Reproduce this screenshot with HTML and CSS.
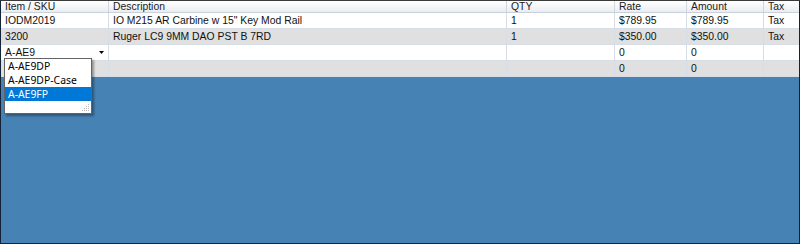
FILE: index.html
```html
<!DOCTYPE html>
<html>
<head>
<meta charset="utf-8">
<link rel="stylesheet" href="styles.css">
</head>
<body>
<div class="grid">
  <div class="row head">
    <div class="c c1">Item / SKU</div>
    <div class="c c2">Description</div>
    <div class="c c3">QTY</div>
    <div class="c c4">Rate</div>
    <div class="c c5">Amount</div>
    <div class="c c6">Tax</div>
  </div>
  <div class="row">
    <div class="c c1">IODM2019</div>
    <div class="c c2">IO M215 AR Carbine w 15" Key Mod Rail</div>
    <div class="c c3">1</div>
    <div class="c c4">$789.95</div>
    <div class="c c5">$789.95</div>
    <div class="c c6">Tax</div>
  </div>
  <div class="row alt">
    <div class="c c1">3200</div>
    <div class="c c2">Ruger LC9 9MM DAO PST B 7RD</div>
    <div class="c c3">1</div>
    <div class="c c4">$350.00</div>
    <div class="c c5">$350.00</div>
    <div class="c c6">Tax</div>
  </div>
  <div class="row">
    <div class="c c1 combo">
      <span class="combo-text">A-AE9</span>
      <span class="combo-btn"><svg width="5" height="3" viewBox="0 0 5 3"><path d="M0 0h5L2.5 3z" fill="#000"/></svg></span>
      <div class="list">
        <div class="item">A-AE9DP</div>
        <div class="item">A-AE9DP-Case</div>
        <div class="item sel">A-AE9FP</div>
        <svg class="grip" width="8" height="8" viewBox="0 0 8 8"><g fill="#b8b8b8"><rect x="6" y="0" width="1" height="1"/><rect x="4" y="2" width="1" height="1"/><rect x="6" y="2" width="1" height="1"/><rect x="2" y="4" width="1" height="1"/><rect x="4" y="4" width="1" height="1"/><rect x="6" y="4" width="1" height="1"/><rect x="0" y="6" width="1" height="1"/><rect x="2" y="6" width="1" height="1"/><rect x="4" y="6" width="1" height="1"/><rect x="6" y="6" width="1" height="1"/></g></svg>
      </div>
    </div>
    <div class="c c2"></div>
    <div class="c c3"></div>
    <div class="c c4">0</div>
    <div class="c c5">0</div>
    <div class="c c6"></div>
  </div>
  <div class="row alt">
    <div class="c c1"></div>
    <div class="c c2"></div>
    <div class="c c3"></div>
    <div class="c c4">0</div>
    <div class="c c5">0</div>
    <div class="c c6"></div>
  </div>
  <div class="empty"></div>
</div>
</body>
</html>
```
FILE: styles.css
```css
html, body {
  margin: 0;
  padding: 0;
}
body {
  width: 800px;
  height: 244px;
  overflow: hidden;
  font-family: "Liberation Sans", Arial, sans-serif;
  font-size: 10.4px;
  color: #111;
}
.grid {
  box-sizing: border-box;
  width: 800px;
  height: 244px;
  border: 1px solid #13243a;
  border-top-color: #3a3a3a;
  display: flex;
  flex-direction: column;
  background: #4682b4;
}
.row {
  display: grid;
  grid-template-columns: 108px 398px 108px 72px 77px 1fr;
  height: 16px;
  background: #fff;
  border-bottom: 1px solid #d6dde6;
  box-sizing: border-box;
}
.row.alt {
  background: #e0e0e0;
}
.row.head {
  height: 12px;
  background: linear-gradient(#ffffff, #e9edf2);
  border-bottom: 1px solid #c8d0da;
}
.c {
  box-sizing: border-box;
  border-right: 1px solid #d6dde6;
  padding-left: 4px;
  padding-top: 1px;
  line-height: 14px;
  white-space: nowrap;
  overflow: hidden;
}
.head .c {
  padding-top: 0;
  line-height: 11px;
  border-right-color: #cfd6de;
  color: #222;
}
.c6 {
  border-right: none;
}
.empty {
  flex: 1;
}
.combo {
  position: relative;
  overflow: visible;
  display: flex;
  align-items: center;
  background: #fff;
  padding-top: 0;
}
.combo-text {
  flex: 1;
}
.combo-btn {
  width: 14px;
  height: 14px;
  display: flex;
  align-items: center;
  justify-content: center;
}
.combo-btn svg {
  display: block;
}
.list {
  position: absolute;
  left: 3px;
  top: 13px;
  width: 88px;
  height: 56px;
  box-sizing: border-box;
  background: #fff;
  border: 1px solid #646464;
  box-shadow: 2px 2px 2px rgba(0,0,0,0.35);
  font-family: "Noto Sans", "DejaVu Sans", sans-serif;
  font-size: 10.4px;
  color: #000;
  z-index: 5;
}
.item {
  height: 14px;
  line-height: 14px;
  padding-left: 3px;
  white-space: nowrap;
}
.item.sel {
  background: #0078d7;
  color: #fff;
}
.grip {
  position: absolute;
  right: 1px;
  bottom: 1px;
}
```
